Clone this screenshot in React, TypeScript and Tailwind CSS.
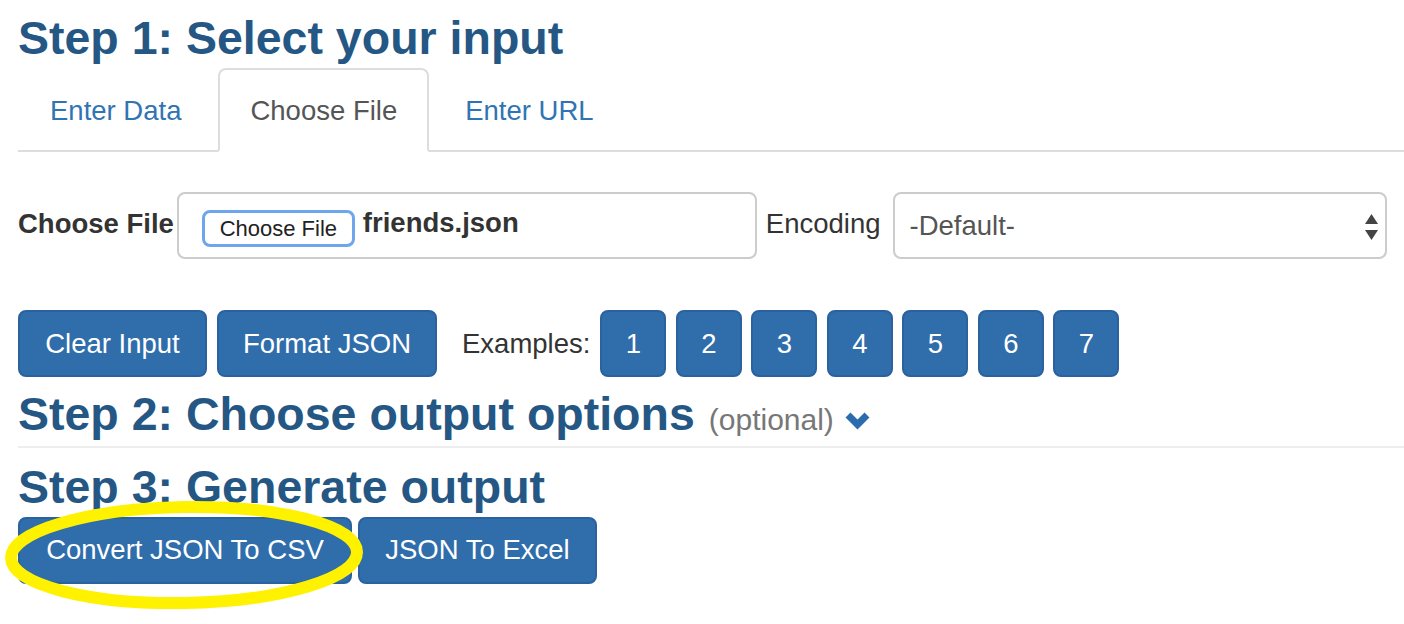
import React from 'react';

const btn =
    'h-[67px] flex items-center justify-center border-2 border-[#2a62a0] bg-[#2f6dab] text-white text-[27.5px] rounded-[8px]';

export default function App() {
    return (
        <div className="w-[1404px] h-[624px] bg-white overflow-hidden pl-[18px] font-['Liberation_Sans',Arial,sans-serif] text-[#333]">
            <h1 className="mt-[13px] text-[46.5px] leading-[51px] font-bold text-[#255785]">
                Step 1: Select your input
            </h1>

            {/* tabs */}
            <ul className="mt-[4px] flex border-b-2 border-[#ddd]">
                <li className="-mb-[2px] mr-[5px]">
                    <a className="block px-[30px] pt-[21px] pb-[19px] leading-[40px] text-[27.5px] border-2 border-transparent rounded-t-[8px] text-[#3174b3]">
                        Enter Data
                    </a>
                </li>
                <li className="-mb-[2px] mr-[4px]">
                    <a className="block px-[30px] pt-[21px] pb-[19px] leading-[40px] text-[27.5px] border-2 border-[#ddd] border-b-white bg-white rounded-t-[8px] text-[#555]">
                        Choose File
                    </a>
                </li>
                <li className="-mb-[2px]">
                    <a className="block px-[30px] pt-[21px] pb-[19px] leading-[40px] text-[27.5px] border-2 border-transparent rounded-t-[8px] text-[#3174b3]">
                        Enter URL
                    </a>
                </li>
            </ul>

            {/* file row */}
            <div className="mt-[40px] flex items-center h-[67px]">
                <span className="font-bold text-[27.5px] mb-[3px] mr-[3px]">Choose File</span>
                <div className="w-[580px] h-[67px] border-2 border-[#ccc] rounded-[8px] flex items-start pt-[16px] pl-[23px]">
                    <span className="h-[37px] w-[153px] border-[3px] border-[#6ea6ee] rounded-[8px] bg-white flex items-center justify-center text-[22px] text-[#222]">
                        Choose File
                    </span>
                    <span className="ml-[8px] font-bold text-[27.5px] leading-[25px] text-[#333]">friends.json</span>
                </div>
                <span className="ml-[9px] text-[27.5px] mb-[3px]">Encoding</span>
                <div className="ml-[12px] w-[494px] h-[67px] border-2 border-[#ccc] rounded-[8px] flex items-center justify-between pl-[15px] pr-[7px]">
                    <span className="text-[27.5px] text-[#555]">-Default-</span>
                    <svg width="13" height="26" viewBox="0 0 13 26" className="mt-[2px]">
                        <polygon points="6.5,0 13,10 0,10" fill="#444" />
                        <polygon points="0,16 13,16 6.5,26" fill="#444" />
                    </svg>
                </div>
            </div>

            {/* action row */}
            <div className="mt-[51px] flex items-center h-[67px]">
                <button className={`${btn} w-[189px]`}>Clear Input</button>
                <button className={`${btn} w-[220px] ml-[10px]`}>Format JSON</button>
                <span className="ml-[25px] text-[27.5px] text-[#333]">Examples:</span>
                <div className="ml-[10px] flex gap-[9.5px]">
                    {['1', '2', '3', '4', '5', '6', '7'].map((n) => (
                        <button key={n} className={`${btn} w-[66px]`}>
                            {n}
                        </button>
                    ))}
                </div>
            </div>

            <h2 className="mt-[12px] flex items-baseline text-[46.5px] leading-[51px] font-bold text-[#255785]">
                <span>Step 2: Choose output options</span>
                <span className="ml-[14px] text-[30px] leading-none font-normal text-[#777]">(optional)</span>
                <svg width="25" height="19" viewBox="0 0 25 19" className="ml-[11px] mb-[2px]">
                    <polyline
                        points="3,4 12.5,13.5 22,4"
                        fill="none"
                        stroke="#2b6cae"
                        strokeWidth="7"
                        strokeLinecap="butt"
                        strokeLinejoin="miter"
                    />
                </svg>
            </h2>
            <div className="mt-[6px] h-[2px] bg-[#eee]" />

            <h2 className="mt-[14px] text-[46.5px] leading-[51px] font-bold text-[#255785]">
                Step 3: Generate output
            </h2>
            <div className="relative mt-[4px] flex items-center h-[66px]">
                <button className={`${btn} h-[66px] w-[334px]`}>Convert JSON To CSV</button>
                <button className={`${btn} h-[66px] w-[239px] ml-[6px]`}>JSON To Excel</button>
                <svg
                    width="390"
                    height="126"
                    viewBox="0 0 390 126"
                    className="absolute -left-[18px] -top-[22px] pointer-events-none"
                >
                    <ellipse
                        cx="184"
                        cy="60"
                        rx="173"
                        ry="48"
                        fill="none"
                        stroke="#fff200"
                        strokeWidth="12"
                        transform="rotate(-1 184 60)"
                    />
                </svg>
            </div>
        </div>
    );
}
